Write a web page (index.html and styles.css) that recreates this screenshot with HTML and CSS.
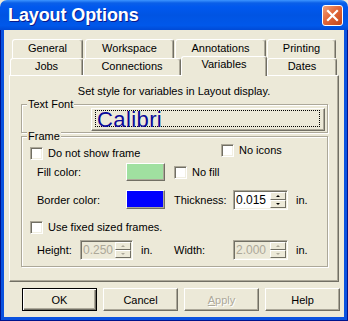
FILE: index.html
```html
<!DOCTYPE html>
<html lang="en">
<head>
  <meta charset="UTF-8">
  <title>Layout Options</title>
  <link rel="stylesheet" href="styles.css">
</head>
<body>
  <div class="window">
    <div class="titlebar">
      <span class="title">Layout Options</span>
      <span class="close-btn">
        <svg width="13" height="13" viewBox="0 0 13 13">
          <path d="M2 2 L11 11 M11 2 L2 11" stroke="#fff" stroke-width="2.2" stroke-linecap="square"/>
        </svg>
      </span>
    </div>
    <div class="frame">
      <div class="client">
        <!-- tab rows -->
        <div class="tab-row back-row">
          <div class="tab w-general">General</div>
          <div class="tab w-workspace">Workspace</div>
          <div class="tab w-annotations">Annotations</div>
          <div class="tab w-printing">Printing</div>
        </div>
        <div class="tab-row front-row">
          <div class="tab w-jobs">Jobs</div>
          <div class="tab w-connections">Connections</div>
          <div class="tab w-variables selected">Variables</div>
          <div class="tab w-dates">Dates</div>
        </div>

        <div class="panel">
          <div class="hint">Set style for variables in Layout display.</div>

          <div class="group font-group">
            <div class="legend">Text Font</div>
            <div class="font-btn">
              <div class="focus-rect"><span class="font-name">Calibri</span></div>
            </div>
          </div>

          <div class="group frame-group">
            <div class="legend">Frame</div>

            <div class="row row-a">
              <label class="check check-wide">
                <span class="box"></span><span class="check-text">Do not show frame</span>
              </label>
              <label class="check check-up">
                <span class="box"></span><span class="check-text">No icons</span>
              </label>
            </div>

            <div class="row row-b">
              <span class="lbl lbl-first">Fill color:</span>
              <span class="swatch swatch-fill"></span>
              <label class="check check-after">
                <span class="box"></span><span class="check-text">No fill</span>
              </label>
            </div>

            <div class="row row-c">
              <span class="lbl lbl-first">Border color:</span>
              <span class="swatch swatch-border"></span>
              <span class="lbl lbl-second">Thickness:</span>
              <div class="spin spin-wide">
                <span class="spin-val">0.015</span>
                <span class="spin-btns">
                  <span class="arrow-btn"><i class="arrow up"></i></span>
                  <span class="arrow-btn"><i class="arrow down"></i></span>
                </span>
              </div>
              <span class="unit">in.</span>
            </div>

            <div class="row row-d">
              <label class="check">
                <span class="box"></span><span class="check-text">Use fixed sized frames.</span>
              </label>
            </div>

            <div class="row row-e">
              <span class="lbl lbl-height">Height:</span>
              <div class="spin disabled">
                <span class="spin-val">0.250</span>
                <span class="spin-btns">
                  <span class="arrow-btn"><i class="arrow up"></i></span>
                  <span class="arrow-btn"><i class="arrow down"></i></span>
                </span>
              </div>
              <span class="unit unit-mid">in.</span>
              <span class="lbl lbl-second">Width:</span>
              <div class="spin spin-wide disabled">
                <span class="spin-val">2.000</span>
                <span class="spin-btns">
                  <span class="arrow-btn"><i class="arrow up"></i></span>
                  <span class="arrow-btn"><i class="arrow down"></i></span>
                </span>
              </div>
              <span class="unit">in.</span>
            </div>
          </div>
        </div>

        <div class="button-row">
          <button class="btn default">OK</button>
          <button class="btn">Cancel</button>
          <button class="btn" disabled><u>A</u>pply</button>
          <button class="btn">Help</button>
        </div>
      </div>
    </div>
  </div>
</body>
</html>
```

FILE: styles.css
```css
* {
  box-sizing: border-box;
}
body {
  margin: 0;
  width: 348px;
  height: 321px;
  overflow: hidden;
  background: #ece9d8;
  font-family: "Liberation Sans", Arial, sans-serif;
  font-size: 11px;
  line-height: 13px;
  color: #000;
}
.window {
  width: 348px;
  height: 321px;
  display: flex;
  flex-direction: column;
}

/* title bar */
.titlebar {
  height: 30px;
  flex: none;
  display: flex;
  align-items: center;
  padding: 0 5px 0 8px;
  border-radius: 7px 7px 0 0;
  background: linear-gradient(#3d95ff 0, #0a5fe8 3px, #0058ee 7px, #0054e3 50%, #0058ea 85%, #004ad6 100%);
}
.title {
  flex: 1;
  color: #fff;
  font-weight: bold;
  font-size: 18px;
  letter-spacing: -0.1px;
  line-height: 30px;
  text-shadow: 1px 1px #0a1a8c;
}
.close-btn {
  width: 21px;
  height: 21px;
  margin-top: 1px;
  border: 1px solid #fff;
  border-radius: 3px;
  background: linear-gradient(135deg, #f0a27c 0%, #e2673a 45%, #c4461a 100%);
  display: flex;
  align-items: center;
  justify-content: center;
}

/* window body */
.frame {
  flex: 1;
  display: flex;
  padding: 0 4px 4px;
  background: #0a52df;
  box-shadow: inset 1px 0 #00138c, inset -1px 0 #00138c, inset 0 -1px #00138c;
}
.client {
  flex: 1;
  background: #ece9d8;
  padding-top: 9px;
  display: flex;
  flex-direction: column;
}

/* tabs */
.tab-row {
  display: flex;
  flex: none;
}
.back-row {
  height: 19px;
  margin-left: 8px;
}
.front-row {
  height: 17px;
  margin-left: 6px;
}
.tab {
  height: 100%;
  text-align: center;
  padding-top: 1px;
  border: 1px solid #fff;
  border-right-color: #716f64;
  border-bottom: none;
  border-radius: 3px 3px 0 0;
  box-shadow: inset -1px 0 #aca899;
  background: #ece9d8;
}
.back-row .tab {
  padding-top: 2px;
}
.w-general { width: 71px; }
.w-workspace { width: 89px; margin-left: 2px; }
.w-annotations { width: 91px; margin-left: 1px; }
.w-printing { width: 69px; margin-left: 1px; }
.w-jobs { width: 73px; }
.w-connections { width: 98px; }
.w-variables { width: 86px; }
.w-dates { width: 70px; }
.tab.selected {
  position: relative;
  z-index: 1;
  height: 20px;
  margin-top: -2px;
}

/* panel */
.panel {
  width: 330px;
  height: 207px;
  margin-left: 5px;
  padding-top: 9px;
  border: 1px solid #fff;
  border-right-color: #716f64;
  border-bottom-color: #716f64;
  box-shadow: inset -1px -1px #aca899;
}
.hint {
  text-align: center;
}

.group {
  width: 307px;
  margin-left: 11px;
  border: 1px solid #aca899;
  box-shadow: inset 1px 1px #fff, 1px 1px #fff;
}
.legend {
  display: table;
  margin: -7px 0 0 5px;
  padding: 0 1px;
  background: #ece9d8;
}
.font-group {
  margin-top: 6px;
  padding-bottom: 1px;
}
.font-btn {
  width: 234px;
  height: 23px;
  margin: -3px 0 0 69px;
  padding: 1px 4px 2px 3px;
  border: 1px solid #fff;
  border-right-color: #716f64;
  border-bottom-color: #716f64;
  box-shadow: inset -1px -1px #aca899;
}
.focus-rect {
  height: 17px;
  border: 1px dotted #000;
  padding-left: 1px;
}
.font-name {
  display: block;
  font-size: 22px;
  line-height: 17px;
  color: #0a0a9a;
  letter-spacing: 0.4px;
}

.frame-group {
  margin-top: 3px;
  padding: 0 0 6px 0;
}
.row {
  display: flex;
  align-items: center;
}
.row-a {
  height: 17px;
  align-items: flex-start;
  padding-left: 8px;
}
.row-b {
  height: 18px;
  margin-top: 3px;
  padding-left: 15px;
}
.row-c {
  height: 20px;
  margin-top: 9px;
  padding-left: 15px;
}
.row-d {
  height: 13px;
  margin-top: 11px;
  padding-left: 8px;
}
.row-e {
  height: 20px;
  margin-top: 6px;
  padding-left: 15px;
}

/* checkboxes */
.check {
  display: flex;
  align-items: center;
}
.check-wide {
  width: 191px;
  margin-top: 4px;
}
.check-up {
  margin-top: 1px;
}
.check-after {
  margin-left: 9px;
}
.box {
  width: 13px;
  height: 13px;
  flex: none;
  background: #fff;
  border: 1px solid #aca899;
  border-right-color: #fff;
  border-bottom-color: #fff;
  box-shadow: inset 1px 1px #716f64, inset -1px -1px #f1efe2;
}
.check-text {
  margin-left: 5px;
  white-space: nowrap;
}

/* labels and colour swatches */
.lbl {
  white-space: nowrap;
  flex: none;
}
.lbl-first { width: 89px; }
.lbl-second { width: 59px; }
.lbl-height { width: 43px; }
.swatch {
  width: 39px;
  flex: none;
  border: 1px solid #fff;
  border-right-color: #716f64;
  border-bottom-color: #716f64;
  box-shadow: inset -1px -1px #aca899;
}
.swatch-fill {
  height: 18px;
  background-color: #a0e0a0;
}
.swatch-border {
  height: 19px;
  align-self: flex-start;
  background-color: #0000ff;
}
.row-c .lbl-second {
  margin-left: 9px;
}

/* spin inputs */
.spin {
  width: 53px;
  height: 20px;
  flex: none;
  display: flex;
  padding: 1px 1px 1px 0;
  background: #fff;
  border: 1px solid #aca899;
  border-right-color: #fff;
  border-bottom-color: #fff;
  box-shadow: inset 1px 1px #716f64, inset -1px -1px #f1efe2;
}
.spin-wide {
  width: 55px;
}
.spin-val {
  flex: 1;
  padding-left: 2px;
  font-size: 12px;
  line-height: 16px;
}
.spin-btns {
  width: 16px;
  display: flex;
  flex-direction: column;
}
.arrow-btn {
  flex: 1;
  display: flex;
  align-items: center;
  justify-content: center;
  background: #ece9d8;
  border: 1px solid #fff;
  border-right-color: #716f64;
  border-bottom-color: #716f64;
}
.arrow {
  width: 0;
  height: 0;
  border-left: 2px solid transparent;
  border-right: 2px solid transparent;
}
.arrow.up {
  border-bottom: 2px solid #000;
}
.arrow.down {
  border-top: 2px solid #000;
}
.spin.disabled {
  background: #ece9d8;
  color: #aca899;
}
.spin.disabled .arrow.up {
  border-bottom-color: #aca899;
}
.spin.disabled .arrow.down {
  border-top-color: #aca899;
}
.unit {
  margin-left: 8px;
}
.unit-mid {
  width: 33px;
  flex: none;
}

/* dialog buttons */
.button-row {
  display: flex;
  gap: 6px;
  margin: 6px 0 0 18px;
}
.btn {
  width: 75px;
  height: 23px;
  padding: 0;
  font-family: "Liberation Sans", Arial, sans-serif;
  font-size: 11px;
  color: #000;
  background: #ece9d8;
  border: 1px solid #fff;
  border-right-color: #716f64;
  border-bottom-color: #716f64;
  box-shadow: inset -1px -1px #aca899;
}
.btn.default {
  border: 1px solid #000;
  box-shadow: inset 1px 1px #fff, inset -1px -1px #716f64, inset -2px -2px #aca899;
}
.btn:disabled {
  color: #aca899;
  text-shadow: 1px 1px #fff;
}
```
